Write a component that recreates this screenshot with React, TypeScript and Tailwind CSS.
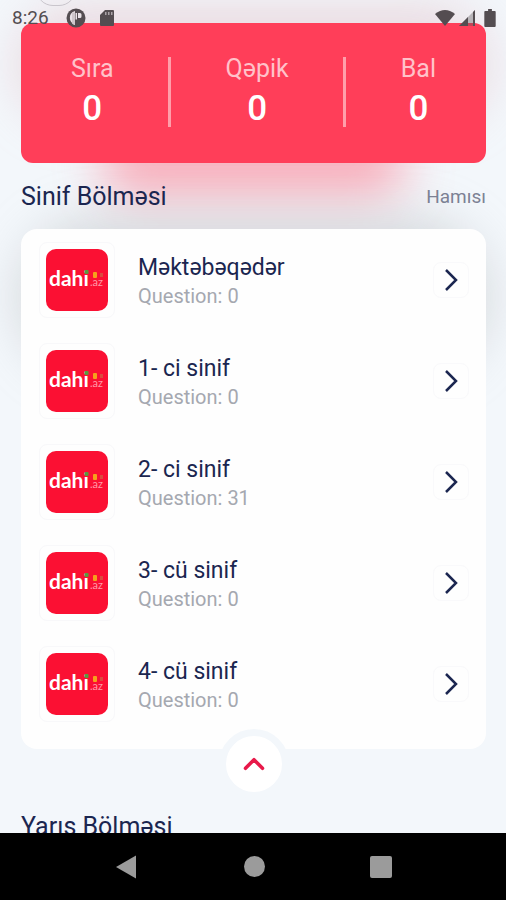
import { ChevronUp } from 'lucide-react'

const stats = [
  { label: 'Sıra', value: 0 },
  { label: 'Qəpik', value: 0 },
  { label: 'Bal', value: 0 },
]

const grades = [
  { title: 'Məktəbəqədər', questions: 0 },
  { title: '1- ci sinif', questions: 0 },
  { title: '2- ci sinif', questions: 31 },
  { title: '3- cü sinif', questions: 0 },
  { title: '4- cü sinif', questions: 0 },
]

function StatusBar() {
  return (
    <div className="absolute inset-x-0 top-0 z-20 flex h-9 items-center justify-between pl-3 pr-[10px] text-[#544d51]">
      <div className="flex items-center">
        <span className="font-[Roboto,sans-serif] text-[19px] leading-6">8:26</span>
        <svg className="ml-[17px] size-5" viewBox="0 0 20 20" aria-hidden="true">
          <circle cx="10" cy="10" r="9.500" fill="currentColor" />
          <path d="M9 3v13.500A7 7 0 0 1 9 3Z" fill="#e9e2e7" />
          <path d="M9.500 5H11v6.500H9.500ZM12 5h2a1.500 1.500 0 0 1 1.500 1.500v2A1.500 1.500 0 0 1 14 10h-2Z" fill="#e9e2e7" />
          <path d="M6 4.500h3V17H8a7 7 0 0 1-2-1.500Z" fill="#cfc7cc" />
        </svg>
        <svg className="ml-[13px] h-[18px] w-4" viewBox="0 0 16 18" aria-hidden="true">
          <path d="M6 1h8a1 1 0 0 1 1 1v14a1 1 0 0 1-1 1H2a1 1 0 0 1-1-1V6Z" fill="currentColor" />
          <path d="M6 3h1.500v3H6ZM9 3h1.500v3H9ZM12 3h1.500v3H12Z" fill="#aaa3a8" />
        </svg>
      </div>
      <div className="flex items-center">
        <svg className="h-[18px] w-[22px]" viewBox="0 0 22 18" aria-hidden="true">
          <path d="M11 17 1 5Q11-3 21 5Z" fill="currentColor" />
        </svg>
        <svg className="ml-0.5 size-[18px]" viewBox="0 0 18 18" aria-hidden="true">
          <path d="M1 17 17 1v16Z" fill="currentColor" opacity=".35" />
          <path d="M1 17 10 8v9ZM15 3l2-2v16h-2Z" fill="currentColor" />
        </svg>
        <svg className="ml-2 h-[18px] w-3" viewBox="0 0 12 19" aria-hidden="true">
          <path d="M4 0h4v2h3a1 1 0 0 1 1 1v15a1 1 0 0 1-1 1H1a1 1 0 0 1-1-1V3a1 1 0 0 1 1-1h3Z" fill="currentColor" />
        </svg>
      </div>
    </div>
  )
}

function StatsCard() {
  return (
    <section className="relative">
      {/* soft glow around and under the card */}
      <div className="absolute -inset-x-1 -top-4 bottom-10 rounded-full bg-[#dba0ac]/35 blur-xl" />
      <div className="absolute inset-x-20 -bottom-8 h-16 rounded-full bg-[#ff6078]/50 blur-xl" />
      <div className="relative flex h-[140px] items-start justify-between rounded-xl bg-[#ff3e59] px-[50px] pt-[34px] text-center">
        {stats.map((stat, i) => (
          <div key={stat.label} className="contents">
            {i > 0 && <div className="h-[70px] w-[3px] bg-[#ff9eaa]" />}
            <div>
              <div className="text-[25px] leading-6 text-[#ffc2ca]">{stat.label}</div>
              <div className="mt-[10px] text-[35px] font-medium leading-9 text-white">{stat.value}</div>
            </div>
          </div>
        ))}
      </div>
    </section>
  )
}

function Logo() {
  return (
    <div className="flex size-[76px] shrink-0 items-center justify-center rounded-lg border border-[#f8f8fa]">
      <svg className="size-[62px]" viewBox="0 0 62 62" role="img" aria-label="dahi.az">
        <rect width="62" height="62" rx="10" fill="#fb1033" />
        <text x="3" y="37" fill="#fff" fontSize="21" fontWeight="700" fontFamily="Lato, sans-serif">
          dahi
        </text>
        <text x="44" y="37" fill="#ff9aa8" fontSize="11" fontFamily="Lato, sans-serif">
          .az
        </text>
        <rect x="38.500" y="21" width="4" height="4" rx="1" fill="#5a9a3c" />
        <rect x="47" y="23" width="4" height="6" rx="1" fill="#f6a01b" />
        <rect x="54" y="24" width="3" height="4" fill="#dc4a3f" />
      </svg>
    </div>
  )
}

export default function App() {
  return (
    <div className="relative flex h-screen flex-col overflow-hidden bg-[#f3f7fb] font-[Roboto,'Noto_Sans',sans-serif] text-[#1b2650]">
      <StatusBar />
      <div className="absolute -top-7 left-9 z-10 h-[34px] w-10 rounded-full border border-[#c9c5cc]" />

      <main className="relative min-h-0 flex-1 overflow-hidden pl-[21px] pr-5 pt-[23px]">
        <StatsCard />

        <div className="relative z-10 mt-4 flex h-9 items-center justify-between">
          <h2 className="text-[25px] leading-9">Sinif Bölməsi</h2>
          <a href="#all" className="text-[19px] leading-6 text-[#7c8194]">Hamısı</a>
        </div>

        <section className="relative mt-[14px]">
          <div className="absolute -inset-x-1 -top-3 h-40 rounded-full bg-[#a0a2a6]/35 blur-xl" />
          <ul className="relative flex flex-col gap-[25px] rounded-2xl bg-[#fefefe] pb-[27px] pl-[18px] pr-[17px] pt-[13px]">
            {grades.map((grade) => (
              <li key={grade.title} className="flex items-center">
                <Logo />
                <div className="ml-[23px] flex-1 pt-1">
                  <h3 className="text-[23px] leading-7">{grade.title}</h3>
                  <p className="text-[20px] leading-7 text-[#a5a8b0]">Question: {grade.questions}</p>
                </div>
                <button
                  type="button"
                  aria-label={grade.title}
                  className="flex size-9 items-center justify-center rounded-lg border border-[#f9f9fb]"
                >
                  <svg className="h-6 w-4" viewBox="0 0 16 24" fill="none" stroke="currentColor" strokeWidth="2.500">
                    <path d="M3 2l10 10L3 22" />
                  </svg>
                </button>
              </li>
            ))}
          </ul>
          <button
            type="button"
            aria-label="Yığ"
            className="absolute -bottom-[50px] left-1/2 flex size-[70px] -translate-x-1/2 items-center justify-center rounded-full border-[7px] border-[#f3f7fb] bg-white text-[#e8194a]"
          >
            <ChevronUp size={34} strokeWidth={2.5} />
          </button>
        </section>

        <h2 className="mt-[60px] text-[25px] leading-9">Yarış Bölməsi</h2>
      </main>

      <nav className="relative z-10 flex h-[67px] shrink-0 items-center justify-around bg-black px-[62px] text-[#9b9b9b]">
        <button type="button" aria-label="Back">
          <svg className="size-6" viewBox="0 0 24 24" fill="currentColor">
            <path d="M1 12 21 .5v23Z" />
          </svg>
        </button>
        <button type="button" aria-label="Home" className="size-[21px] rounded-full bg-[#9b9b9b]" />
        <button type="button" aria-label="Recents" className="size-[22px] rounded-xs bg-[#9b9b9b]" />
      </nav>
    </div>
  )
}
